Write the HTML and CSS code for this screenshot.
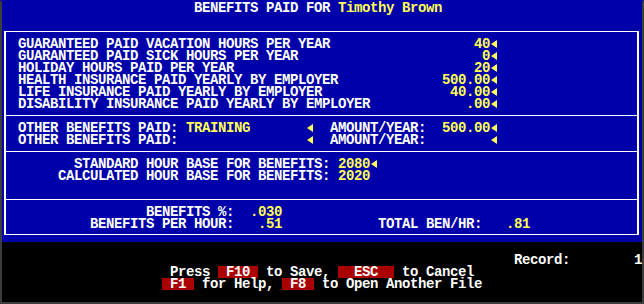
FILE: index.html
```html
<!DOCTYPE html>
<html>
<head>
<meta charset="utf-8">
<link rel="stylesheet" href="styles.css">
</head>
<body>
<div class="screen">
  <div class="main">
    <div class="r">                        BENEFITS PAID FOR <span class="y">Timothy Brown</span></div>
    <div class="frame">
      <div class="sec">
        <div class="r"> GUARANTEED PAID VACATION HOURS PER YEAR                  <span class="y">40</span><i class="ar"></i></div>
        <div class="r"> GUARANTEED PAID SICK HOURS PER YEAR                       <span class="y">0</span><i class="ar"></i></div>
        <div class="r"> HOLIDAY HOURS PAID PER YEAR                              <span class="y">20</span><i class="ar"></i></div>
        <div class="r"> HEALTH INSURANCE PAID YEARLY BY EMPLOYER             <span class="y">500.00</span><i class="ar"></i></div>
        <div class="r"> LIFE INSURANCE PAID YEARLY BY EMPLOYER                <span class="y">40.00</span><i class="ar"></i></div>
        <div class="r"> DISABILITY INSURANCE PAID YEARLY BY EMPLOYER            <span class="y">.00</span><i class="ar"></i></div>
      </div>
      <div class="sec">
        <div class="r"> OTHER BENEFITS PAID: <span class="y">TRAINING</span>       <i class="ar"></i>  AMOUNT/YEAR:  <span class="y">500.00</span><i class="ar"></i></div>
        <div class="r"> OTHER BENEFITS PAID:                <i class="ar"></i>  AMOUNT/YEAR:        <i class="ar"></i></div>
      </div>
      <div class="sec">
        <div class="r">        STANDARD HOUR BASE FOR BENEFITS: <span class="y">2080</span><i class="ar"></i></div>
        <div class="r">      CALCULATED HOUR BASE FOR BENEFITS: <span class="y">2020</span></div>
        <div class="r"></div>
      </div>
      <div class="sec last">
        <div class="r">                 BENEFITS %:  <span class="y">.030</span></div>
        <div class="r">          BENEFITS PER HOUR:   <span class="y">.51</span>            TOTAL BEN/HR:   <span class="y">.81</span></div>
      </div>
    </div>
  </div>
  <div class="foot">
    <div class="r">                                                                Record:        1</div>
    <div class="r">                     Press <span class="k"> F10 </span> to Save, <span class="k">  ESC  </span> to Cancel</div>
    <div class="r">                    <span class="k"> F1 </span> for Help, <span class="k"> F8 </span> to Open Another File</div>
  </div>
</div>
</body>
</html>
```
FILE: styles.css
```css
html, body {
  margin: 0;
  padding: 0;
  background: #000;
}
.screen {
  width: 640px;
  height: 300px;
  border: 2px solid #3c3c3c;
  border-top-color: #0000aa;
  background: #000;
  font-family: "Liberation Mono", "DejaVu Sans Mono", monospace;
  font-weight: bold;
  font-size: 14px;
  letter-spacing: -0.4px;
  color: #fff;
}
.main {
  height: 240px;
  background: #0000aa;
}
.r {
  height: 12px;
  line-height: 12px;
  white-space: pre;
}
.y {
  color: #ffff55;
}
.frame {
  margin: 17px 0 0 2px;
  width: 631px;
  border-style: solid;
  border-color: #fff;
  border-width: 1px 2px;
}
.sec {
  padding: 6px 0 5px 4px;
  border-bottom: 1px solid #fff;
}
.sec.last {
  padding-bottom: 4px;
  border-bottom: none;
}
.ar {
  display: inline-block;
  width: 0;
  height: 0;
  vertical-align: top;
  margin: 2px 1px 0 1px;
  border-right: 6px solid #ffff55;
  border-top: 4px solid transparent;
  border-bottom: 4px solid transparent;
}
.foot {
  height: 60px;
  padding-top: 12px;
  box-sizing: border-box;
  background: #000;
}
.k {
  background: #aa0000;
  display: inline-block;
  height: 12px;
  vertical-align: top;
}
```
